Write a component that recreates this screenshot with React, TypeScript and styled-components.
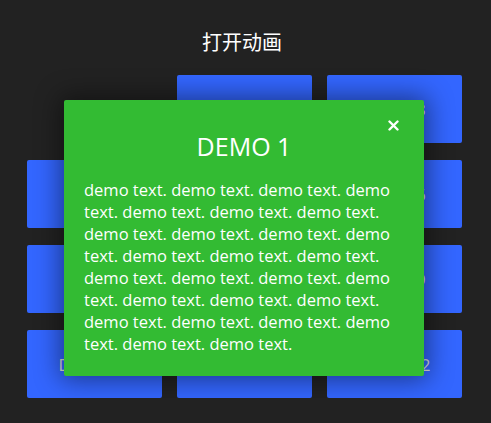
import React from 'react';
import styled, { createGlobalStyle } from 'styled-components';

const GlobalStyle = createGlobalStyle`
  html, body {
    margin: 0;
    padding: 0;
    background: #222222;
  }
  body {
    font-family: "Open Sans", "Noto Sans CJK SC", sans-serif;
    color: #ffffff;
  }
`;

const Page = styled.div`
  display: flex;
  flex-direction: column;
  align-items: center;
  padding-top: 28px;
`;

const Heading = styled.h1`
  margin: 0 0 19px;
  padding-right: 7px;
  font-family: "Noto Sans CJK SC", sans-serif;
  font-size: 20px;
  font-weight: 400;
  line-height: 28px;
  color: #ffffff;
`;

const Board = styled.div`
  position: relative;
  margin-left: -2px;
`;

const Grid = styled.div`
  display: grid;
  grid-template-columns: repeat(3, 135px);
  grid-auto-rows: 68px;
  column-gap: 15px;
  row-gap: 17px;
`;

const Cell = styled.div<{ $hidden?: boolean }>`
  display: flex;
  align-items: center;
  justify-content: center;
  background: #3366ff;
  border-radius: 2px;
  color: #dddddd;
  font-size: 16.5px;
  visibility: ${p => (p.$hidden ? 'hidden' : 'visible')};
`;

const Modal = styled.div`
  position: absolute;
  top: 25px;
  left: 37px;
  width: 360px;
  box-sizing: border-box;
  padding: 28px 20px 21px;
  background: #33bb33;
  border-radius: 2px;
  box-shadow: 0 0 26px 4px rgba(0, 0, 0, 0.45);
`;

const Close = styled.button`
  position: absolute;
  top: 20px;
  right: 25px;
  padding: 0;
  border: 0;
  background: none;
  cursor: pointer;
  display: flex;
`;

const ModalTitle = styled.h2`
  margin: 0 0 15px;
  text-align: center;
  font-size: 25px;
  font-weight: 400;
  line-height: 36px;
`;

const ModalBody = styled.p`
  margin: 0;
  font-size: 16.5px;
  line-height: 22px;
`;

const labels = Array.from({ length: 12 }, (_, i) => `DEMO ${i + 1}`);

export default function App() {
  const text = Array.from({ length: 27 }, () => 'demo text.').join(' ');
  return (
    <>
      <GlobalStyle />
      <Page>
        <Heading>打开动画</Heading>
        <Board>
          <Grid>
            {labels.map((l, i) => (
              <Cell key={l} $hidden={i === 0}>
                {l}
              </Cell>
            ))}
          </Grid>
          <Modal>
            <Close aria-label="close">
              <svg width="11" height="11" viewBox="0 0 11 11">
                <path d="M1.5 1.5 L9.5 9.5 M9.5 1.5 L1.5 9.5" stroke="#fff" strokeWidth="2.4" strokeLinecap="round" />
              </svg>
            </Close>
            <ModalTitle>DEMO 1</ModalTitle>
            <ModalBody>{text}</ModalBody>
          </Modal>
        </Board>
      </Page>
    </>
  );
}
